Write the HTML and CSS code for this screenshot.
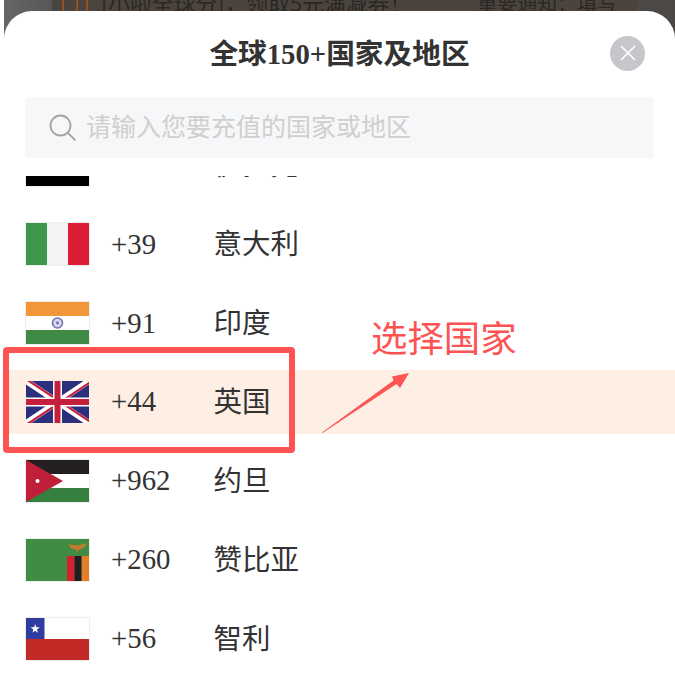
FILE: index.html
```html
<!DOCTYPE html>
<html lang="zh-CN">
<head>
    <meta charset="UTF-8">
    <meta name="viewport" content="width=device-width, initial-scale=1.0">
    <title>选择国家</title>
    <link rel="stylesheet" href="styles.css">
</head>
<body>
    <div class="page">
        <div class="screen">
            <div class="notice">
                <svg class="notice-icon" width="28" height="28" viewBox="0 0 28 28" fill="none" stroke="#a8561a" stroke-width="1.6">
                    <path d="M2 6v16h5"/>
                    <path d="M14 3c3 7 3 15 0 22"/>
                    <path d="M24 2c3 8 3 16 0 24"/>
                </svg>
                <span class="notice-text">[小啦全球分]，领取5元满减券！</span>
                <span class="notice-text notice-second">重要通知：填写</span>
            </div>
            <div class="sheet">
                <header class="sheet-head">
                    <h1 class="sheet-title">全球150+国家及地区</h1>
                    <div class="close-btn">
                        <svg width="16" height="16" viewBox="0 0 16 16" stroke="#fff" stroke-width="1.6">
                            <path d="M1 1l14 14M15 1L1 15"/>
                        </svg>
                    </div>
                </header>
                <div class="search">
                    <svg width="27" height="27" viewBox="0 0 27 27" fill="none" stroke="#a3a3a3" stroke-width="1.8">
                        <circle cx="11.5" cy="11.5" r="10"/>
                        <path d="M18.5 18.5l8 8"/>
                    </svg>
                    <span class="search-hint">请输入您要充值的国家或地区</span>
                </div>
                <div class="list-view">
                    <ul class="country-list">
                        <li class="country">
                            <svg class="flag" viewBox="0 0 63 42">
                                <rect width="63" height="14" fill="#c8202c"/>
                                <rect y="14" width="63" height="14" fill="#fff"/>
                                <rect y="28" width="63" height="14" fill="#000"/>
                            </svg>
                            <span class="code">+964</span>
                            <span class="name">伊拉克</span>
                        </li>
                        <li class="country">
                            <svg class="flag" viewBox="0 0 63 42">
                                <rect width="21" height="42" fill="#3d974c"/>
                                <rect x="21" width="21" height="42" fill="#f3f4f6"/>
                                <rect x="42" width="21" height="42" fill="#da1c36"/>
                            </svg>
                            <span class="code">+39</span>
                            <span class="name">意大利</span>
                        </li>
                        <li class="country">
                            <svg class="flag" viewBox="0 0 63 42">
                                <rect width="63" height="14" fill="#f39539"/>
                                <rect y="14" width="63" height="14" fill="#fff"/>
                                <rect y="28" width="63" height="14" fill="#3f8a44"/>
                                <circle cx="31.500" cy="21" r="5" fill="#d8d8ec" stroke="#7272ae" stroke-width="1.600"/>
                                <circle cx="31.500" cy="21" r="1.400" fill="#6a6aa8"/>
                            </svg>
                            <span class="code">+91</span>
                            <span class="name">印度</span>
                        </li>
                        <li class="country country-active">
                            <svg class="flag" viewBox="0 0 63 42">
                                <rect width="63" height="42" fill="#2b2f7c"/>
                                <path d="M0 0l63 42M63 0L0 42" stroke="#fff" stroke-width="6"/>
                                <path d="M0 0l31.500 21M63 42L31.500 21" stroke="#c41f3c" stroke-width="2.200" transform="translate(1 -1.300)"/>
                                <path d="M63 0L31.500 21M0 42l31.500-21" stroke="#c41f3c" stroke-width="2.200" transform="translate(1 1.300)"/>
                                <path d="M31.500 0v42M0 21h63" stroke="#fff" stroke-width="9"/>
                                <path d="M31.500 0v42M0 21h63" stroke="#c41f3c" stroke-width="6"/>
                            </svg>
                            <span class="code">+44</span>
                            <span class="name">英国</span>
                        </li>
                        <li class="country">
                            <svg class="flag" viewBox="0 0 63 42">
                                <rect width="63" height="14" fill="#231f20"/>
                                <rect y="14" width="63" height="14" fill="#fff"/>
                                <rect y="28" width="63" height="14" fill="#35803f"/>
                                <path d="M0 0l37 21L0 42z" fill="#c01f3a"/>
                                <circle cx="11.500" cy="21" r="2" fill="#fff"/>
                            </svg>
                            <span class="code">+962</span>
                            <span class="name">约旦</span>
                        </li>
                        <li class="country">
                            <svg class="flag" viewBox="0 0 63 42">
                                <rect width="63" height="42" fill="#3f8c42"/>
                                <rect x="41" y="17" width="7.500" height="25" fill="#d4222f"/>
                                <rect x="48.500" y="17" width="7.200" height="25" fill="#231f20"/>
                                <rect x="55.700" y="17" width="7.300" height="25" fill="#e47f28"/>
                                <path d="M42 5l8 1.600 1.200-1.200 1.200 1.200 9-2.600-4 5-4.500 1.600-1.600 3-1.600-3-4.500-1.400z" fill="#c9792a"/>
                            </svg>
                            <span class="code">+260</span>
                            <span class="name">赞比亚</span>
                        </li>
                        <li class="country">
                            <svg class="flag" viewBox="0 0 63 42">
                                <rect width="63" height="21" fill="#fff"/>
                                <rect y="21" width="63" height="21" fill="#c22a27"/>
                                <rect width="18.500" height="21" fill="#2f3e9e"/>
                                <path d="M9.200 6l1.100 3.300h3.500l-2.800 2.100 1 3.400-2.800-2-2.800 2 1-3.400-2.800-2.100h3.500z" fill="#fff"/>
                            </svg>
                            <span class="code">+56</span>
                            <span class="name">智利</span>
                        </li>
                    </ul>
                </div>
            </div>
        </div>
        <div class="mark-box"></div>
        <div class="mark-label">选择国家</div>
        <svg class="mark-arrow" width="100" height="70" viewBox="0 0 100 70">
            <path d="M2 62.500L73.500 10.500 72 6.500 89 3 80 18 76.500 14 2.500 63z" fill="#fe5353"/>
        </svg>
    </div>
</body>
</html>
```

FILE: styles.css
```css
html, body {
    margin: 0;
    padding: 0;
    background: #fff;
}
body {
    font-family: "Liberation Serif", "Noto Sans CJK SC", serif;
    color: #333;
    overflow: hidden;
}
.page {
    position: relative;
    height: 678px;
    overflow: hidden;
    padding-left: 4px;
}
.screen {
    height: 678px;
    display: flex;
    flex-direction: column;
    overflow: hidden;
    background: linear-gradient(90deg, #666 0%, #555 8%, #4b4845 100%);
}
.notice {
    height: 11px;
    flex: none;
    display: flex;
    align-items: flex-end;
    margin: 0 38px 0 48px;
    padding-left: 9px;
    overflow: hidden;
    background: #4b443e;
    color: #2a2724;
    font-family: "Noto Sans CJK SC", sans-serif;
    font-size: 21.800px;
    line-height: 21px;
    white-space: nowrap;
}
.notice-icon {
    flex: none;
    margin-right: 12px;
    margin-bottom: -8px;
}
.notice-text {
    margin-bottom: -2px;
}
.notice-second {
    margin-left: 66px;
    font-size: 20px;
}
.sheet {
    flex: 1;
    min-height: 0;
    display: flex;
    flex-direction: column;
    background: #fff;
    border-radius: 28px 28px 0 0;
}
.sheet-head {
    height: 86px;
    flex: none;
    display: grid;
    grid-template-columns: 1fr auto 1fr;
    align-items: center;
}
.sheet-title {
    grid-column: 2;
    margin: 0 0 5px;
    font-size: 28.700px;
    font-weight: 700;
    white-space: nowrap;
}
.close-btn {
    grid-column: 3;
    justify-self: end;
    width: 35px;
    height: 35px;
    margin-right: 30px;
    margin-bottom: 2px;
    border-radius: 50%;
    background: #c6c7cb;
    display: flex;
    align-items: center;
    justify-content: center;
}
.search {
    flex: none;
    height: 61px;
    margin: 0 21px;
    padding-left: 24px;
    display: flex;
    align-items: center;
    gap: 10px;
    background: #f6f7f9;
    border-radius: 4px;
}
.search-hint {
    font-size: 25px;
    color: #cfcfcf;
    margin-bottom: 6px;
}
.list-view {
    flex: 1;
    min-height: 0;
    margin-top: 18px;
    overflow: hidden;
}
.country-list {
    list-style: none;
    margin: -42.700px 0 0;
    padding: 0;
    display: flex;
    flex-direction: column;
    gap: 14.900px;
}
.country {
    height: 64px;
    flex: none;
    display: flex;
    align-items: center;
    padding-left: 21px;
}
.country-active {
    background: #feefe5;
}
.flag {
    width: 63px;
    height: 42px;
    flex: none;
    border: 1px solid #eee;
}
.country-active .flag {
    border-color: #feefe5;
}
.code {
    width: 102.500px;
    margin-left: 21px;
    flex: none;
    font-size: 28.800px;
}
.name {
    font-size: 28.500px;
    margin-bottom: 5px;
}
.mark-box {
    position: absolute;
    left: 3px;
    top: 346.500px;
    width: 280px;
    height: 94px;
    border: 6px solid #fe5353;
    border-radius: 4px;
}
.mark-label {
    position: absolute;
    left: 371px;
    top: 310px;
    font-family: "Noto Sans CJK SC", sans-serif;
    font-size: 36.400px;
    font-weight: 400;
    line-height: 52px;
    color: #fe5353;
}
.mark-arrow {
    position: absolute;
    left: 320px;
    top: 370px;
}
```
